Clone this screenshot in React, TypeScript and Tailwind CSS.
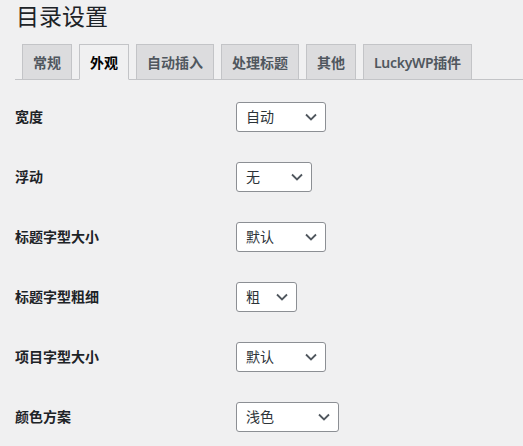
import React from "react";

const font = { fontFamily: '"Noto Sans", "Noto Sans CJK SC", sans-serif' };

const tabs = ["常规", "外观", "自动插入", "处理标题", "其他", "LuckyWP插件"];

const rows = [
  { label: "宽度", value: "自动", width: "w-[90px]" },
  { label: "浮动", value: "无", width: "w-[76px]" },
  { label: "标题字型大小", value: "默认", width: "w-[90px]" },
  { label: "标题字型粗细", value: "粗", width: "w-[61px]" },
  { label: "项目字型大小", value: "默认", width: "w-[90px]" },
  { label: "颜色方案", value: "浅色", width: "w-[103px]" },
];

const Chevron = () => (
  <svg width="12" height="8" viewBox="0 0 12 8" className="shrink-0">
    <polyline points="1,1.5 6,6.5 11,1.5" fill="none" stroke="#50575e" strokeWidth="1.8" />
  </svg>
);

const FakeSelect = ({ value, width }: { value: string; width: string }) => (
  <div
    className={`${width} h-[30px] flex items-center justify-between pl-[9px] pr-[8px] bg-white border border-[#8c8f94] rounded-[3px] text-[14px] text-[#2c3338]`}
  >
    <span className="leading-none">{value}</span>
    <Chevron />
  </div>
);

export default function App() {
  return (
    <div className="min-h-[446px] w-[523px] overflow-hidden bg-[#f0f0f1] pl-[15px]" style={font}>
      <h1 className="pt-[1px] text-[23px] leading-[30px] font-normal text-[#1d2327] pl-[1px]">
        目录设置
      </h1>
      <div className="mt-[13px] flex items-end border-b border-[#c3c4c7] pl-[7px] gap-[7px] -mr-[40px]">
        {tabs.map((t, i) => (
          <div
            key={t}
            className={
              i === 1
                ? "-mb-px h-[36px] px-[10px] flex items-center border border-[#c3c4c7] border-b-[#f0f0f1] bg-[#f0f0f1] text-[14px] font-semibold text-black"
                : i === 5
                ? "-mb-px h-[36px] px-[10px] flex items-center border border-[#c3c4c7] bg-[#dcdcde] text-[14px] font-semibold text-[#50575e] tracking-[-0.3px]"
                : "-mb-px h-[36px] px-[10px] flex items-center border border-[#c3c4c7] bg-[#dcdcde] text-[14px] font-semibold text-[#50575e]"
            }
          >
            {t}
          </div>
        ))}
      </div>
      <div className="mt-[7px] flex flex-col">
        {rows.map((r) => (
          <div key={r.label} className="flex items-center h-[60px]">
            <div className="w-[221px] text-[14px] font-bold text-[#1d2327] -mt-[2px]">{r.label}</div>
            <FakeSelect value={r.value} width={r.width} />
          </div>
        ))}
      </div>
    </div>
  );
}
